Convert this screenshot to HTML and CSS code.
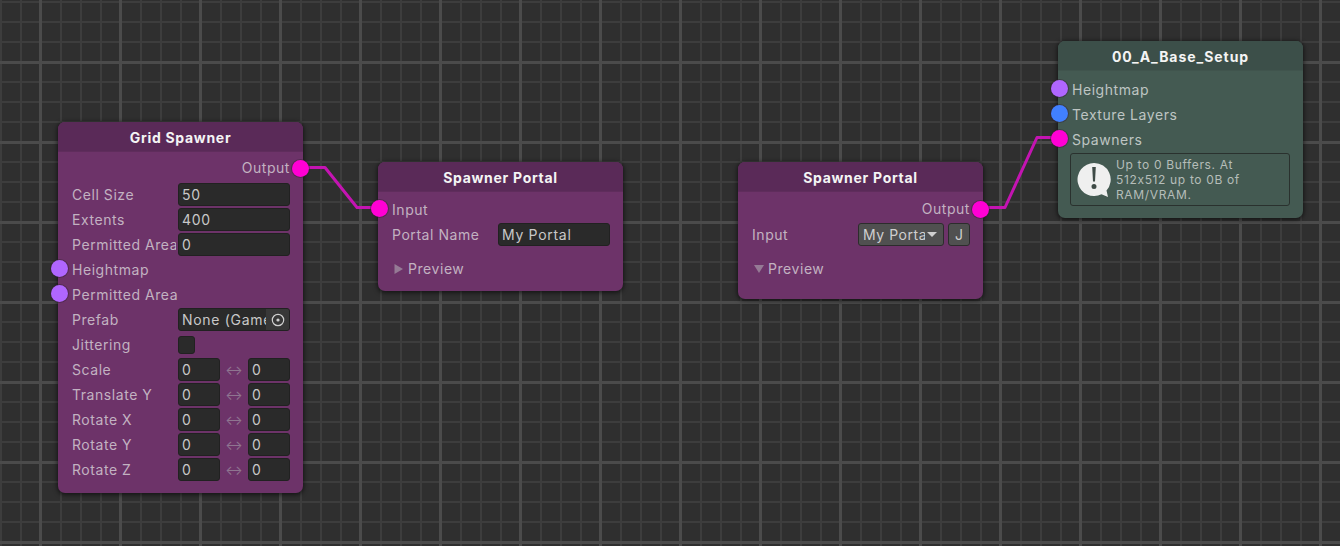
FILE: index.html
```html
<!DOCTYPE html>
<html lang="en">
<head>
<meta charset="utf-8">
<title>Graph</title>
<link rel="stylesheet" href="styles.css">
</head>
<body>
<main class="canvas">
  <svg class="wires" width="1340" height="546" viewBox="0 0 1340 546">
    <path class="wire" d="M300 167.500H325L357 207.500H380"/>
    <path class="wire" d="M980 207.500H1005L1037 137.500H1060"/>
  </svg>

  <section class="node n-grid">
    <h2 class="title">Grid Spawner</h2>
    <div class="body">
      <div class="row row-out"><span class="label">Output</span><i class="port p-mag p-right"></i></div>
      <div class="row"><span class="label fixed">Cell Size</span><span class="field">50</span></div>
      <div class="row"><span class="label fixed">Extents</span><span class="field">400</span></div>
      <div class="row"><span class="label fixed">Permitted Area</span><span class="field">0</span></div>
      <div class="row"><i class="port p-pur p-left"></i><span class="label">Heightmap</span></div>
      <div class="row"><i class="port p-pur p-left"></i><span class="label">Permitted Area</span></div>
      <div class="row"><span class="label fixed">Prefab</span><span class="field field-obj"><span class="clip">None (GameObject)</span><span class="picker"><svg width="16" height="16" viewBox="0 0 16 16"><circle class="pick-ring" cx="8" cy="8" r="5.700"/><circle class="pick-dot" cx="8" cy="8" r="1.600"/></svg></span></span></div>
      <div class="row"><span class="label fixed">Jittering</span><span class="check"></span></div>
      <div class="row"><span class="label fixed">Scale</span><span class="field f-half">0</span><span class="arrow">↔</span><span class="field f-half">0</span></div>
      <div class="row"><span class="label fixed">Translate Y</span><span class="field f-half">0</span><span class="arrow">↔</span><span class="field f-half">0</span></div>
      <div class="row"><span class="label fixed">Rotate X</span><span class="field f-half">0</span><span class="arrow">↔</span><span class="field f-half">0</span></div>
      <div class="row"><span class="label fixed">Rotate Y</span><span class="field f-half">0</span><span class="arrow">↔</span><span class="field f-half">0</span></div>
      <div class="row"><span class="label fixed">Rotate Z</span><span class="field f-half">0</span><span class="arrow">↔</span><span class="field f-half">0</span></div>
    </div>
  </section>

  <section class="node n-portal-a">
    <h2 class="title">Spawner Portal</h2>
    <div class="body body-portal">
      <div class="row"><i class="port p-mag p-left"></i><span class="label">Input</span></div>
      <div class="row"><span class="label fixed">Portal Name</span><span class="field">My Portal</span></div>
      <div class="row row-preview"><svg class="tri" width="10" height="10" viewBox="0 0 10 10"><path d="M0.500 0L9 5L0.500 10Z"/></svg><span class="label">Preview</span></div>
    </div>
  </section>

  <section class="node n-portal-b">
    <h2 class="title">Spawner Portal</h2>
    <div class="body body-portal">
      <div class="row row-out"><span class="label">Output</span><i class="port p-mag p-right"></i></div>
      <div class="row row-input"><span class="label grow">Input</span><span class="popup"><span class="clip">My Portal</span><svg class="caret" width="10" height="5" viewBox="0 0 10 5"><path d="M0 0H10L5 5Z"/></svg></span><span class="btn">J</span></div>
      <div class="row row-preview"><svg class="tri" width="10" height="10" viewBox="0 0 10 10"><path d="M0 1H10L5 9Z"/></svg><span class="label">Preview</span></div>
    </div>
  </section>

  <section class="node node-green n-base">
    <h2 class="title">00_A_Base_Setup</h2>
    <div class="body">
      <div class="row"><i class="port p-pur p-left"></i><span class="label">Heightmap</span></div>
      <div class="row"><i class="port p-blu p-left"></i><span class="label">Texture Layers</span></div>
      <div class="row"><i class="port p-mag p-left"></i><span class="label">Spawners</span></div>
      <div class="help">
        <svg class="help-icon" width="34" height="36" viewBox="0 0 34 36"><path class="bubble" d="M17 1A16.500 16.500 0 1 0 24.500 32.200L31 35L29.500 28.500A16.500 16.500 0 0 0 17 1Z"/><path class="mark" d="M15.200 5H18.800L18 19.500H16ZM17 22A2.500 2.500 0 1 1 17 27A2.500 2.500 0 1 1 17 22Z"/></svg>
        <p class="help-text">Up to 0 Buffers. At 512x512 up to 0B of RAM/VRAM.</p>
      </div>
    </div>
  </section>
</main>
</body>
</html>
```
FILE: styles.css
```css
* { box-sizing: border-box; }
html, body { margin: 0; padding: 0; }
body { width: 1340px; height: 546px; overflow: hidden; background: #2f2f2f; font-family: Inter, "Liberation Sans", sans-serif; }

.canvas {
  position: relative;
  width: 1340px;
  height: 546px;
  overflow: hidden;
  background-color: #2f2f2f;
  background-image:
    linear-gradient(to right, #4b4b4b 3px, transparent 3px),
    linear-gradient(to bottom, #4b4b4b 3px, transparent 3px),
    linear-gradient(to right, #3d3d3d 2px, transparent 2px),
    linear-gradient(to bottom, #3d3d3d 2px, transparent 2px);
  background-size: 80px 80px, 80px 80px, 20px 20px, 20px 20px;
  background-position: 39px 0, 0 61px, 0 0, 0 1px;
}

.wires { position: absolute; left: 0; top: 0; }
.wire { fill: none; stroke: #c414b2; stroke-width: 3; stroke-linejoin: round; }

.node {
  position: absolute;
  width: 245px;
  border-radius: 7px;
  background: #6d3369;
  box-shadow: 0 1px 4px 1px rgba(0, 0, 0, .55);
  color: #c2b2c1;
  font-size: 14px;
  letter-spacing: .55px;
}
.n-grid { left: 58px; top: 122px; height: 371px; }
.n-portal-a { left: 378px; top: 162px; height: 129px; }
.n-portal-b { left: 738px; top: 162px; height: 137px; }
.n-base { left: 1058px; top: 41px; height: 177px; }

.node-green { background: #445a52; color: #bec5c2; }

.title {
  margin: 0;
  height: 29px;
  line-height: 31px;
  text-align: center;
  font-size: 14px;
  font-weight: 700;
  letter-spacing: .7px;
  color: #f4f4f4;
  background: #5a2a58;
  border-radius: 7px 7px 0 0;
  box-shadow: 0 1px 0 #5f2d5c;
}
.node-green .title { background: #3c4f49; box-shadow: 0 1px 0 #40544d; letter-spacing: .95px; }

.body { padding: 7px 13px 0 14px; }
.n-grid .body { padding-top: 4px; }
.body-portal { padding-top: 6px; }
.n-portal-b .body { padding-top: 5px; }
.row { position: relative; display: flex; align-items: center; height: 25px; white-space: nowrap; }
.row-out { justify-content: flex-end; margin-bottom: 2px; }
.n-portal-b .row-out { margin-bottom: 1px; }
.row-preview { margin-top: 9px; gap: 4px; padding-left: 2px; }
.row-input { gap: 4px; }
.grow { flex: 1; }

.label { display: block; }
.fixed { flex: 0 0 104px; margin-right: 2px; overflow: hidden; }

.field {
  flex: 1;
  display: flex;
  align-items: center;
  height: 23px;
  padding: 0 3px;
  border: 1px solid #212121;
  border-radius: 3px;
  background: #2a2a2a;
  color: #c8c8c8;
  letter-spacing: .7px;
  min-width: 0;
  overflow: hidden;
}
.f-half { flex: 0 0 42px; }
.arrow { flex: 0 0 28px; text-align: center; color: #8f7590; font-size: 13px; letter-spacing: 0; }

.field-obj { padding-right: 0; }
.clip { overflow: hidden; flex: 1; min-width: 0; }
.picker { flex: 0 0 23px; height: 21px; background: #383838; display: flex; align-items: center; justify-content: center; }
.pick-ring { fill: none; stroke: #cfcfcf; stroke-width: 1.200; }
.pick-dot { fill: #cfcfcf; }

.check { width: 17px; height: 18px; border: 1px solid #212121; border-radius: 3px; background: #2a2a2a; }

.popup {
  display: flex;
  align-items: center;
  width: 86px;
  height: 23px;
  padding: 0 6px 0 4px;
  gap: 2px;
  border: 1px solid #2c2c2c;
  border-radius: 3px;
  background: #505050;
  color: #cfcfcf;
}
.caret { flex: 0 0 10px; fill: #cfcfcf; }
.btn {
  width: 22px;
  height: 23px;
  border: 1px solid #2c2c2c;
  border-radius: 3px;
  background: #505050;
  color: #cfcfcf;
  text-align: center;
  line-height: 21px;
  letter-spacing: 0;
}
.tri { flex: 0 0 10px; fill: #957a95; }

.port {
  position: absolute;
  top: 50%;
  width: 17px;
  height: 17px;
  margin-top: -10px;
  border-radius: 50%;
  box-shadow: 0 0 0 1px rgba(50, 30, 50, .45);
}
.p-left { left: -21px; }
.p-right { right: -19px; margin-top: -8px; }
.p-mag { background: #ff00d4; }
.p-pur { background: #b066ff; }
.p-blu { background: #4180ff; }

.help {
  display: flex;
  align-items: center;
  width: 220px;
  height: 53px;
  margin: 1px 0 0 -2px;
  padding: 0 6px;
  gap: 5px;
  border: 1px solid #2a312e;
  border-radius: 3px;
  background: #445a52;
}
.help-icon { flex: 0 0 34px; }
.bubble { fill: #efefef; }
.mark { fill: #3e4a46; }
.help-text { margin: 0; font-size: 12px; line-height: 15px; letter-spacing: .65px; color: #b5bdb9; }
```
